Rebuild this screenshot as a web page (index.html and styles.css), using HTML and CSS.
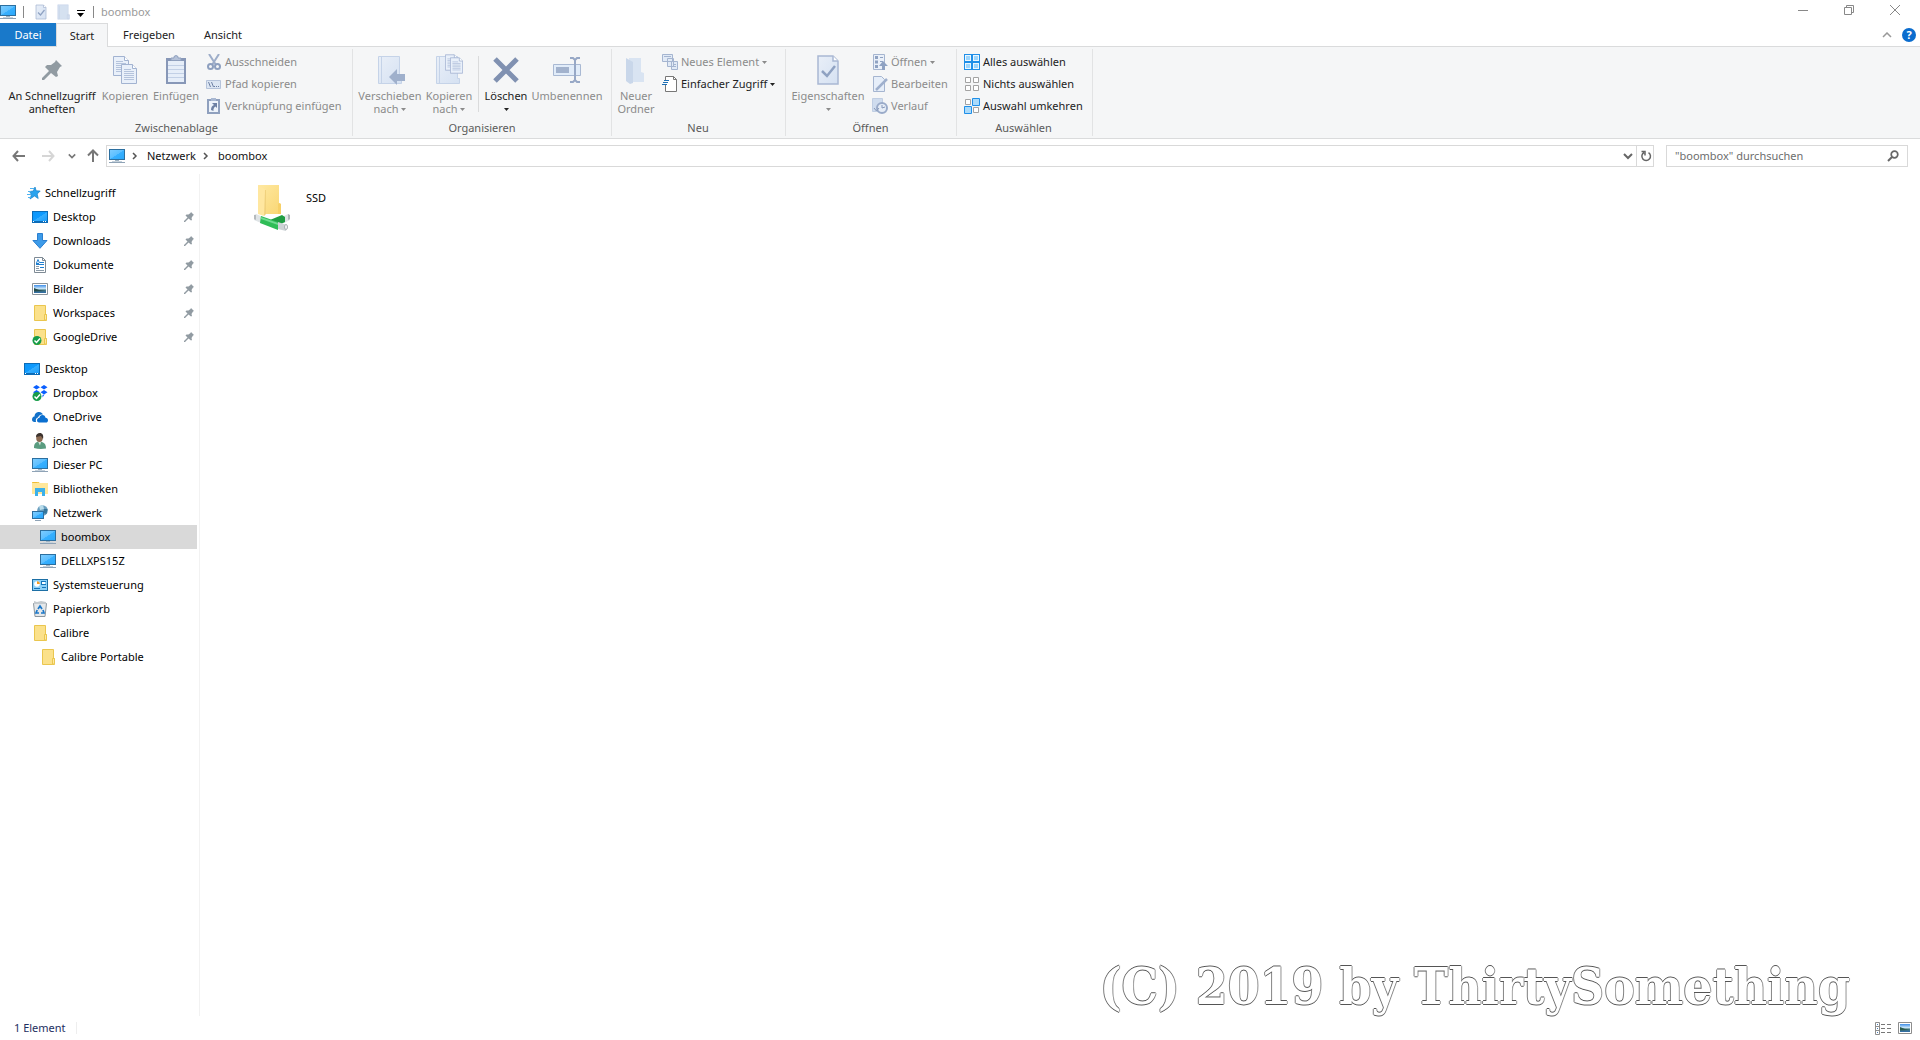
FILE: index.html
```html
<!DOCTYPE html>
<html lang="de">
<head>
<meta charset="utf-8">
<title>boombox</title>
<link rel="stylesheet" href="styles.css">
</head>
<body>
<svg class="sprite" aria-hidden="true">
  <defs>
    <linearGradient id="screen" x1="0" y1="0" x2="1" y2="1"><stop offset="0" stop-color="#7cccff"/><stop offset=".5" stop-color="#5cbfff"/><stop offset=".52" stop-color="#37b0ff"/><stop offset="1" stop-color="#2ba8fb"/></linearGradient>
    <linearGradient id="desk" x1="0" y1="0" x2="1" y2="1"><stop offset="0" stop-color="#0c95f8"/><stop offset=".5" stop-color="#0f9bff"/><stop offset=".52" stop-color="#35aeff"/><stop offset="1" stop-color="#1b9dfb"/></linearGradient>
    <linearGradient id="fold" x1="0" y1="0" x2="1" y2="1"><stop offset="0" stop-color="#ffe9a2"/><stop offset="1" stop-color="#f9d673"/></linearGradient>
    <linearGradient id="photo" x1="0" y1="0" x2="0" y2="1"><stop offset="0" stop-color="#3f8ee8"/><stop offset=".5" stop-color="#d8effb"/><stop offset=".6" stop-color="#4b7f86"/><stop offset="1" stop-color="#2f6ca8"/></linearGradient>
    <linearGradient id="page" x1="0" y1="0" x2="1" y2="1"><stop offset="0" stop-color="#e9eff8"/><stop offset="1" stop-color="#d5e1f2"/></linearGradient>
  </defs>
  <symbol id="pc" viewBox="0 0 16 16"><path fill="#2c6f9f" d="M0 1h16v11H0z"/><path fill="url(#screen)" d="M1 2h14v9H1z"/><path fill="#9fb3c2" d="M6 12h4v1H6z"/><path fill="#8fa3b6" d="M0 14h16v1H0z"/><path fill="#c6d2dc" d="M3 13h10v1H3z"/></symbol>
  <symbol id="desktop" viewBox="0 0 16 16"><path fill="#0b6cb8" d="M0 2h16v12H0z"/><path fill="url(#desk)" d="M1 3h14v9H1z"/><path fill="#fff" d="M1 12h1v1H1zM11 12h1v1h-1zM13 12h1v1h-1z"/></symbol>
  <symbol id="pin" viewBox="0 0 20 20"><path fill="#919ba2" d="M14 0l6 6-2 1-3 5 1 4-2 1-5-4-7 7H0v-2l7-7-4-4 2-2h4l4-3z"/></symbol>
  <symbol id="folder" viewBox="0 0 16 16"><path fill="#fbe18b" stroke="#eac64f" d="M2.500 .5h11v9h1v6h-12z"/><path fill="#ffe9a0" stroke="#eac64f" d="M12.500 9.500h2v5l-2 1z"/></symbol>
  <symbol id="badge" viewBox="0 0 16 16"><circle cx="5" cy="11.500" r="4.500" fill="#179c49"/><path fill="none" stroke="#fff" stroke-width="1.500" d="M2.500 11.500l2 2 3.500-4"/></symbol>
  <symbol id="doc" viewBox="0 0 16 16"><path fill="#fff" stroke="#7e8a94" d="M2.500 .5h8l3 3v12h-11z"/><path fill="none" stroke="#7e8a94" d="M10.500 .5v3h3"/><path fill="none" stroke="#1f7fd0" d="M4 6.500h3M8 5.500h4M4 7.500h8M4.500 6L6 2.500 7.500 6M8 10.500h4"/><path stroke="#8b9aa6" d="M4 9.500h3M4 11.500h3M4 13.500h8"/></symbol>
  <symbol id="picture" viewBox="0 0 16 16"><path fill="#fff" stroke="#8b939a" d="M.5 2.500h15v11H.5z"/><path fill="url(#photo)" d="M2 4h12v8H2z"/><path fill="#274c4c" d="M2 7l5 2 7 1-12 .500z"/></symbol>
  <symbol id="down" viewBox="0 0 16 16"><path fill="#3d9be9" stroke="#2b7fd0" d="M5.500 .5h5v7h4.500L8 15.300.900 7.500h4.600z"/></symbol>
  <symbol id="star" viewBox="0 0 16 16"><path fill="#29a3ee" stroke="#1580c8" stroke-width=".7" d="M9 2l1.200 3.800 4 .2-3 3 1 4.500L8.500 11l-4.500 3L5.500 9.500 3.500 6.500l3.800-.5z"/><path stroke="#4eb3f0" d="M4 3.500h4M2 6.500h3M1 9.500h4M2 12.500h3"/></symbol>
  <symbol id="dropbox" viewBox="0 0 16 16"><path fill="#0a5fff" d="M4.500 0L8 2.300 4.500 4.600 1 2.300zM12 0l3.500 2.300L12 4.600 8.500 2.300zM4.500 5L8 7.300 4.500 9.600 1 7.300zM12 5l3.500 2.300L12 9.600 8.500 7.300zM10.500 10l2-.5-2 3z"/></symbol>
  <symbol id="cloud" viewBox="0 0 16 16"><path fill="#1271c9" d="M0 10.500C0 8 2 7.500 2.500 7.500 2.800 4 5 3 7 3c2.500 0 3.500 1.500 4 2.500C8.500 5 6.500 6.500 6 8.500c-2 .500-2.500 2-2 4.500C1 13 0 12.500 0 10.500z"/><path fill="#0a6fd0" d="M5 11.500c0-2 1.500-2.500 2.300-2.500.2-2 1.700-3 3-3 2 0 3 1.200 3.200 2.700 1.500 0 2.500 1 2.500 2.500S15 13.500 14 13.500H7c-1 0-2-.8-2-2z"/></symbol>
  <symbol id="user" viewBox="0 0 16 16"><path fill="#5a9c80" d="M2 15c0-4 1-5.500 4-6.500l4 .5c3 1 4 3 4 6.500-4 .7-8 .7-12-.5z"/><path fill="#d6e6dc" d="M6 8.500l2 4 1-3.500z"/><ellipse cx="7.500" cy="4.800" rx="3.300" ry="4.300" fill="#8b6a52"/><path fill="#3c332e" d="M4 4C4 1 6 0 8 0s4 2 3 6L9 3z"/></symbol>
  <symbol id="library" viewBox="0 0 16 16"><path fill="#f2c94c" d="M0 1h7l1 2H0z"/><path fill="#ffe79a" d="M0 2h16v11H0z"/><path fill="#eebc35" d="M1 1h4v1H1z"/><path fill="#3cb0ea" d="M3 7h10v8h-3v-4H6v4H3z"/></symbol>
  <symbol id="network" viewBox="0 0 16 16"><circle cx="10.500" cy="5.500" r="5.300" fill="#6b9fbf"/><path fill="#b9dceb" d="M7 1l4-1 1 4-4 1z"/><path fill="#35759b" d="M12 4l3.500 0-1 5-3-1z"/><path fill="#2c6f9f" d="M0 6h12v8H0z"/><path fill="url(#screen)" d="M1 7h10v6H1z"/><path fill="#8fa3b6" d="M3 15h6v1H3z"/></symbol>
  <symbol id="control" viewBox="0 0 16 16"><path fill="#1d6fa5" d="M0 2h16v12H0z"/><path fill="#8bd0f8" d="M1 3h14v10H1z"/><circle cx="5" cy="7" r="2.800" fill="#fff"/><path fill="#f59b23" d="M5 7V4.200A2.800 2.800 0 017.800 7z"/><path stroke="#1574bb" d="M9 4.500h5M9 7.500h5M9.500 4v4M2 11.500h6M10 10.500h4"/><path fill="#fff" d="M10 5h3v2h-3z"/></symbol>
  <symbol id="bin" viewBox="0 0 16 16"><path fill="#e5e8ea" stroke="#8d979e" d="M1.500 2.500h13l-1.500 13H3z"/><path fill="#c3c9cd" d="M2 0l3 1 4-1 5 1v2H2z"/><path fill="none" stroke="#1c78c9" stroke-width="1.700" d="M6 8l2-3 2 3M11 9l1 3H9M7 12H4l1.200-3"/></symbol>
  <symbol id="qcheck" viewBox="0 0 30 32"><path fill="url(#page)" stroke="#a9b8d3" stroke-width="1.500" d="M5 2h15l5 5v23H5z"/><path fill="#fff" stroke="#a9b8d3" stroke-width="1.500" d="M20 2v5h5"/><path fill="none" stroke="#8fa2c2" stroke-width="2.500" d="M9 17l5 5 8-10"/></symbol>
  <symbol id="palefolder" viewBox="0 0 30 32"><path fill="#d5e1f0" stroke="#c5d3e8" d="M4.500 1.500h21v20h2v9h-23z"/><path fill="none" stroke="#c0cfe4" d="M7.500 4v26M23.500 21.500h4v8h-4z"/></symbol>
  <symbol id="sheet" viewBox="0 0 16 20"><path fill="#e9f0fa" stroke="#a2b3d1" d="M.5.5h11l4 4v15H.5z"/><path fill="#fff" stroke="#a2b3d1" d="M11.500.5v4h4"/><path stroke="#b4c3dc" d="M3 5.500h7M3 7.500h10M3 9.500h10M3 11.500h10M3 13.500h10M3 15.500h10"/></symbol>
  <symbol id="copy" viewBox="0 0 30 32"><use href="#sheet" x="3" y="2" width="16" height="20"/><use href="#sheet" x="11" y="10" width="16" height="20"/></symbol>
  <symbol id="paste" viewBox="0 0 30 32"><path fill="#8797b7" d="M5 4h20v26H5z"/><path fill="#e6eef9" d="M7 7h16v21H7z"/><path fill="#b4c1d8" stroke="#8fa0be" d="M10 6.500V4h3V2.500q2-2 4 0V4h3v2.500z"/><path stroke="#c2d0e6" d="M7 11.500h16M7 15.500h16M7 19.500h16M7 23.500h16"/></symbol>
  <symbol id="move" viewBox="0 0 30 32"><path fill="url(#page)" stroke="#c5d3e8" d="M3.500 2.500h21v22h2v5h-23z"/><path stroke="#c5d3e8" d="M6.500 3v26"/><path fill="#9fb0cc" d="M14 23l8-8v5h8v7h-8v4z"/></symbol>
  <symbol id="copyto" viewBox="0 0 30 32"><path fill="url(#page)" stroke="#c5d3e8" d="M2.500 2.500h21v22h2v5h-23z"/><path stroke="#c5d3e8" d="M5.500 3v26"/><use href="#sheet" x="11" y="0" width="13" height="17"/><use href="#sheet" x="16" y="3" width="13" height="17"/></symbol>
  <symbol id="cross" viewBox="0 0 30 32"><path fill="none" stroke="#8091b1" stroke-width="5" d="M4 5l22 22M26 5L4 27"/></symbol>
  <symbol id="rename" viewBox="0 0 30 32"><path fill="#e1ecf9" stroke="#a9b9d3" d="M1.500 10.500h27v11h-27z"/><path fill="#a2b2cd" d="M4 13h13v6H4z"/><path fill="none" stroke="#97a8c6" stroke-width="2" d="M18 4h3l2 2v20l-2 2h-3M28 4h-3l-2 2v20l2 2h3"/></symbol>
  <symbol id="newfolder" viewBox="0 0 30 32"><path fill="#d9e4f2" d="M8 4h12v14l3 1v9H9z"/><path fill="#c9d7ea" d="M5 4l7 4v21l-3 1-4-3z"/></symbol>
  <symbol id="cut" viewBox="0 0 16 16"><path stroke="#9dadc9" stroke-width="2" d="M3 0l7 11M13 0L6 11"/><circle cx="4.500" cy="12.500" r="2.500" fill="none" stroke="#8d9fbf" stroke-width="2"/><circle cx="11.500" cy="12.500" r="2.500" fill="none" stroke="#8d9fbf" stroke-width="2"/></symbol>
  <symbol id="path" viewBox="0 0 16 16"><path fill="#dce6f3" stroke="#b5c3da" d="M.5 4.500h14v8H.5z"/><path fill="none" stroke="#6d80a4" d="M2.500 6l2 5M5.500 6l2 5M8 10.500h1M10 10.500h1M12 10.500h1"/></symbol>
  <symbol id="link" viewBox="0 0 16 16"><path fill="#8fa0be" d="M1 1h13v15H1z"/><path fill="#edf3fb" d="M3 3h9v11H3z"/><path fill="#a9b8d2" d="M5 0h5v3H5z"/><path fill="#6d80a4" d="M6 5h5v5L9.500 8.500Q7 10 7.500 13L5 12q0-4 3-5z"/></symbol>
  <symbol id="newitem" viewBox="0 0 16 16"><path fill="#e1eaf6" stroke="#a5b5d0" d="M.5.5h10v7H.5zM5.500 4.500h6v8h-6zM9.500 7.500h6v8h-6z"/><path stroke="#a5b5d0" d="M2 2.500h7M11 10.500h3M11 12.500h3"/></symbol>
  <symbol id="easy" viewBox="0 0 16 16"><path fill="#fff" stroke="#777" d="M3.500 5V.5h8l3 3v12h-11V9"/><path fill="none" stroke="#777" d="M11.500.5v3h3"/><path stroke="#1c6fb5" d="M2 4.500h5M1 6.500h5M0 8.500h5"/></symbol>
  <symbol id="open" viewBox="0 0 16 16"><path fill="#eaf0f9" stroke="#a5b5d0" d="M1.500.5h11v15h-11z"/><path fill="#8fa2c2" d="M3 2h3v3H3zM3 6.500h3v3H3zM3 11h3v3H3zM8 3h3v1H8zM8 7h3v1H8zM11 7l5 5h-3v4h-3v-4H7z"/></symbol>
  <symbol id="edit" viewBox="0 0 16 16"><path fill="#e6eef9" stroke="#a5b5d0" d="M1.500.5h8l3 3v12h-11z"/><path stroke="#9fb0cd" stroke-width="2.500" d="M4 14L15 3"/></symbol>
  <symbol id="history" viewBox="0 0 16 16"><path fill="#cfdcee" stroke="#c0cee3" d="M.5.5h10v13H.5z"/><circle cx="10" cy="10" r="5" fill="#e6edf7" stroke="#9aabc9" stroke-width="2"/><path fill="none" stroke="#8799ba" d="M10 7v3l3-1M2 10l2.500 3L7 10"/></symbol>
  <symbol id="all" viewBox="0 0 16 16"><path fill="#1f8fe8" d="M0 0h16v16H0z"/><path fill="#e9f6ff" d="M1 1h6v6H1zM9 1h6v6H9zM1 9h6v6H1zM9 9h6v6H9z"/><path fill="#9dd5fb" d="M2 2h4v4H2zM10 2h4v4h-4zM2 10h4v4H2zM10 10h4v4h-4z"/></symbol>
  <symbol id="none" viewBox="0 0 16 16"><path fill="#fff" stroke="#a3a3a3" d="M1.500 1.500h5v5h-5zM9.500 1.500h5v5h-5zM1.500 9.500h5v5h-5zM9.500 9.500h5v5h-5z"/></symbol>
  <symbol id="invert" viewBox="0 0 16 16"><path fill="#fff" stroke="#a3a3a3" d="M1.500 1.500h5v5h-5zM9.500 9.500h5v5h-5z"/><path fill="#a9dafb" stroke="#1f8fe8" d="M8.500.5h7v7h-7zM.5 8.500h7v7h-7z"/></symbol>
  <symbol id="chev" viewBox="0 0 8 8"><path fill="none" stroke="currentColor" stroke-width="1.500" d="M2 1l3 3-3 3"/></symbol>
  <symbol id="chevdown" viewBox="0 0 10 10"><path fill="none" stroke="currentColor" stroke-width="2" d="M1 3l4 4 4-4"/></symbol>
  <symbol id="tri" viewBox="0 0 5 3"><path fill="currentColor" d="M0 0h5L2.500 3z"/></symbol>
</svg>

<div class="window">
  <header class="titlebar">
    <svg class="i16"><use href="#pc"/></svg>
    <span class="rule"></span>
    <button class="quick" aria-label="Eigenschaften"><svg class="i16"><use href="#qcheck"/></svg></button>
    <button class="quick" aria-label="Neuer Ordner"><svg class="i16"><use href="#palefolder"/></svg></button>
    <button class="quick narrow" aria-label="Anpassen"><svg width="8" height="7" viewBox="0 0 8 7"><path d="M0 0h8v1H0zM0 3h7L3.500 7z"/></svg></button>
    <span class="rule"></span>
    <span class="title">boombox</span>
    <div class="winbuttons">
      <button aria-label="Minimieren"><svg width="10" height="10"><path stroke="#888" d="M0 5.500h10"/></svg></button>
      <button aria-label="Verkleinern"><svg width="10" height="10"><path fill="none" stroke="#888" d="M.5 2.500h7v7h-7zM2.500 2V.5h7v7H8"/></svg></button>
      <button aria-label="Schließen"><svg width="10" height="10"><path stroke="#888" d="M0 0l10 10M10 0L0 10"/></svg></button>
    </div>
  </header>

  <nav class="tabs">
    <button class="tab file">Datei</button>
    <button class="tab active">Start</button>
    <button class="tab share">Freigeben</button>
    <button class="tab view">Ansicht</button>
    <div class="tabtools">
      <button aria-label="Menüband minimieren"><svg width="10" height="6"><path fill="none" stroke="#999" stroke-width="1.500" d="M1 5l4-4 4 4"/></svg></button>
      <button class="help" aria-label="Hilfe">?</button>
    </div>
  </nav>

  <section class="ribbon">
    <div class="group clip">
      <div class="tools">
        <button class="big w94 on"><svg class="i30" viewBox="-5 -6 30 32"><use href="#pin" width="20" height="20"/></svg><span>An Schnellzugriff<br>anheften</span></button>
        <button class="big w52"><svg class="i30"><use href="#copy"/></svg><span>Kopieren</span></button>
        <button class="big w50"><svg class="i30"><use href="#paste"/></svg><span>Einfügen</span></button>
        <div class="stack">
          <button class="small"><svg class="i16"><use href="#cut"/></svg>Ausschneiden</button>
          <button class="small"><svg class="i16"><use href="#path"/></svg>Pfad kopieren</button>
          <button class="small"><svg class="i16"><use href="#link"/></svg>Verknüpfung einfügen</button>
        </div>
      </div>
      <h2>Zwischenablage</h2>
    </div>
    <div class="group org">
      <div class="tools">
        <button class="big w66"><svg class="i30"><use href="#move"/></svg><span>Verschieben<br>nach <svg class="tri"><use href="#tri"/></svg></span></button>
        <button class="big w52"><svg class="i30"><use href="#copyto"/></svg><span>Kopieren<br>nach <svg class="tri"><use href="#tri"/></svg></span></button>
        <span class="split"></span>
        <button class="big w50 on"><svg class="i30"><use href="#cross"/></svg><span>Löschen<br><svg class="tri"><use href="#tri"/></svg></span></button>
        <button class="big w72"><svg class="i30"><use href="#rename"/></svg><span>Umbenennen</span></button>
      </div>
      <h2>Organisieren</h2>
    </div>
    <div class="group new">
      <div class="tools">
        <button class="big w42"><svg class="i30"><use href="#newfolder"/></svg><span>Neuer<br>Ordner</span></button>
        <div class="stack">
          <button class="small"><svg class="i16"><use href="#newitem"/></svg>Neues Element <svg class="tri"><use href="#tri"/></svg></button>
          <button class="small on"><svg class="i16"><use href="#easy"/></svg>Einfacher Zugriff <svg class="tri"><use href="#tri"/></svg></button>
        </div>
      </div>
      <h2>Neu</h2>
    </div>
    <div class="group opn">
      <div class="tools">
        <button class="big w78"><svg class="i30"><use href="#qcheck"/></svg><span>Eigenschaften<br><svg class="tri"><use href="#tri"/></svg></span></button>
        <div class="stack">
          <button class="small"><svg class="i16"><use href="#open"/></svg>Öffnen <svg class="tri"><use href="#tri"/></svg></button>
          <button class="small"><svg class="i16"><use href="#edit"/></svg>Bearbeiten</button>
          <button class="small"><svg class="i16"><use href="#history"/></svg>Verlauf</button>
        </div>
      </div>
      <h2>Öffnen</h2>
    </div>
    <div class="group sel">
      <div class="tools">
        <div class="stack">
          <button class="small on"><svg class="i16"><use href="#all"/></svg>Alles auswählen</button>
          <button class="small on"><svg class="i16"><use href="#none"/></svg>Nichts auswählen</button>
          <button class="small on"><svg class="i16"><use href="#invert"/></svg>Auswahl umkehren</button>
        </div>
      </div>
      <h2>Auswählen</h2>
    </div>
  </section>

  <div class="addressrow">
    <div class="history">
      <button aria-label="Zurück"><svg width="14" height="12"><path fill="none" stroke="#777" stroke-width="2" d="M13 6H2M6 1L1.500 6 6 11"/></svg></button>
      <button aria-label="Vorwärts"><svg width="14" height="12"><path fill="none" stroke="#d6d6d6" stroke-width="2" d="M0 6h12M7 1l4.500 5L7 11"/></svg></button>
      <button class="recent" aria-label="Zuletzt besucht"><svg width="8" height="8"><use href="#chevdown"/></svg></button>
      <button class="up" aria-label="Nach oben"><svg width="12" height="14"><path fill="none" stroke="#777" stroke-width="2" d="M6 13V2M1 6.500l5-5 5 5"/></svg></button>
    </div>
    <div class="address">
      <svg class="i16"><use href="#pc"/></svg>
      <svg class="sep"><use href="#chev"/></svg>
      <a href="#netzwerk">Netzwerk</a>
      <svg class="sep"><use href="#chev"/></svg>
      <a href="#boombox">boombox</a>
      <button class="drop" aria-label="Verlauf anzeigen"><svg width="10" height="10"><use href="#chevdown"/></svg></button>
      <button class="reload" aria-label="Aktualisieren"><svg width="12" height="12"><path fill="none" stroke="#666" stroke-width="1.500" d="M4 2.500A4.300 4.300 0 1 0 8.500 2.600M1.500 1.500h3.500v4"/></svg></button>
    </div>
    <div class="search">
      <input type="text" placeholder="&quot;boombox&quot; durchsuchen" aria-label="boombox durchsuchen">
      <svg width="12" height="12"><circle cx="7.500" cy="4.500" r="3.300" fill="none" stroke="#666" stroke-width="1.700"/><path stroke="#666" stroke-width="2" d="M5 7L1 11"/></svg>
    </div>
  </div>

  <main class="body">
    <nav class="tree">
      <ul>
        <li class="l0 quickhead"><a href="#q"><svg class="i16"><use href="#star"/></svg>Schnellzugriff</a></li>
        <li class="l1"><a href="#q1"><svg class="i16"><use href="#desktop"/></svg>Desktop<svg class="pinned"><use href="#pin"/></svg></a></li>
        <li class="l1"><a href="#q2"><svg class="i16"><use href="#down"/></svg>Downloads<svg class="pinned"><use href="#pin"/></svg></a></li>
        <li class="l1"><a href="#q3"><svg class="i16"><use href="#doc"/></svg>Dokumente<svg class="pinned"><use href="#pin"/></svg></a></li>
        <li class="l1"><a href="#q4"><svg class="i16"><use href="#picture"/></svg>Bilder<svg class="pinned"><use href="#pin"/></svg></a></li>
        <li class="l1"><a href="#q5"><svg class="i16"><use href="#folder"/></svg>Workspaces<svg class="pinned"><use href="#pin"/></svg></a></li>
        <li class="l1"><a href="#q6"><svg class="i16"><use href="#folder"/><use href="#badge"/></svg>GoogleDrive<svg class="pinned"><use href="#pin"/></svg></a></li>
      </ul>
      <ul>
        <li class="l0"><a href="#d"><svg class="i16"><use href="#desktop"/></svg>Desktop</a></li>
        <li class="l1"><a href="#d1"><svg class="i16"><use href="#dropbox"/><use href="#badge"/></svg>Dropbox</a></li>
        <li class="l1"><a href="#d2"><svg class="i16"><use href="#cloud"/></svg>OneDrive</a></li>
        <li class="l1"><a href="#d3"><svg class="i16"><use href="#user"/></svg>jochen</a></li>
        <li class="l1"><a href="#d4"><svg class="i16"><use href="#pc"/></svg>Dieser PC</a></li>
        <li class="l1"><a href="#d5"><svg class="i16"><use href="#library"/></svg>Bibliotheken</a></li>
        <li class="l1"><a href="#netzwerk"><svg class="i16"><use href="#network"/></svg>Netzwerk</a></li>
        <li class="l2 current"><a href="#boombox"><svg class="i16"><use href="#pc"/></svg>boombox</a></li>
        <li class="l2"><a href="#d6"><svg class="i16"><use href="#pc"/></svg>DELLXPS15Z</a></li>
        <li class="l1"><a href="#d7"><svg class="i16"><use href="#control"/></svg>Systemsteuerung</a></li>
        <li class="l1"><a href="#d8"><svg class="i16"><use href="#bin"/></svg>Papierkorb</a></li>
        <li class="l1"><a href="#d9"><svg class="i16"><use href="#folder"/></svg>Calibre</a></li>
        <li class="l2"><a href="#d10"><svg class="i16"><use href="#folder"/></svg>Calibre Portable</a></li>
      </ul>
    </nav>
    <section class="files">
      <a class="tile" href="#ssd">
        <svg width="38" height="48" viewBox="0 0 38 48">
          <path fill="url(#fold)" d="M5 1h21v18l2 1v10H12z"/><path fill="#f7d067" d="M26 19l2 1v10h-3V20z"/><path fill="#ffe7a0" d="M5 1l8 5v23l-2 3-6-2z"/><path fill="#f1d27d" d="M12 6h1v24l-2 2z"/>
          <path fill="#dfe4e6" d="M1 31l2-1 7 3-2 6-7-3z"/><path fill="#b5babd" d="M1 31l2 0v5l-2-1z"/>
          <path fill="#dfe4e6" d="M29 33l6-3 2 2v4l-6 3z"/><path fill="#aeb4b7" d="M35 30l2 1v4l-2 1z"/>
          <path fill="#1f9d43" d="M17 36l12-5 3 2v5l-8 4z"/>
          <path fill="#2fbd57" d="M8 32l17 6v8L7 39z"/><path fill="#6fdb90" d="M8 33l17 6v2L8 35z"/>
          <path fill="#cdd3d6" d="M25 38l9 3-1 6-8-2z"/><ellipse cx="33" cy="43" rx="1.500" ry="2.500" fill="#f5f7f8" stroke="#a9afb3"/>
        </svg>
        <span>SSD</span>
      </a>
    </section>
    <p class="watermark">(C) 2019 by ThirtySomething</p>
  </main>

  <footer class="status">
    <span class="count">1 Element</span>
    <div class="modes">
      <button aria-label="Details"><svg width="17" height="13"><path fill="#fff" stroke="#8d8d8d" d="M.5.5h4v12h-4zM0 4.500h5M0 8.500h5"/><path stroke="#777" stroke-dasharray="4 2" d="M6 2.500h10M6 6.500h10M6 10.500h10"/><path fill="#4a7fb8" d="M2 2h1v1H2zM2 6h1v1H2zM2 10h1v1H2z"/></svg></button>
      <button aria-label="Große Symbole"><svg width="14" height="12"><path fill="#fff" stroke="#8d8d8d" d="M.5.500h13v11H.5z"/><path fill="url(#photo)" d="M2 2h10v8H2z"/><path fill="#2c5c50" d="M2 5l5 2 5 1-10 .500z"/></svg></button>
    </div>
  </footer>
</div>
</body>
</html>
```

FILE: styles.css
```css
* { box-sizing: border-box; }
body { margin: 0; background: #fff; color: #000; font: 11px/16px "Noto Sans", "Open Sans", sans-serif; }
button { margin: 0; padding: 0; border: 0; background: none; font: inherit; color: inherit; }
a { color: inherit; text-decoration: none; }
svg { display: block; flex: none; }
ul { list-style: none; margin: 0; padding: 0; }
.sprite { position: absolute; width: 0; height: 0; }
.i16 { width: 16px; height: 16px; }
.i30 { width: 30px; height: 32px; }
.window { display: flex; flex-direction: column; min-height: 100vh; }

.titlebar { display: flex; align-items: center; height: 23px; color: #999; }
.rule { width: 1px; height: 12px; background: #888; margin: 0 7px; }
.rule + .quick { margin-left: -1px; }
.quick { width: 22px; display: flex; justify-content: center; color: #000; }
.quick.narrow { width: 14px; padding-top: 4px; }
.quick.narrow + .rule { margin-left: 5px; }
.winbuttons { display: flex; margin-left: auto; padding: 0 2px 3px 0; }
.winbuttons button { width: 46px; display: flex; justify-content: center; }

.tabs { display: flex; height: 24px; border-bottom: 1px solid #dadbdc; color: #222; }
.tab { height: 23px; }
.file { width: 56px; background: #1979ca; color: #fff; }
.active { width: 52px; height: 24px; border: 1px solid #dadbdc; border-bottom: 0; background: #f5f6f7; }
.share { width: 82px; }
.view { width: 66px; }
.tabtools { display: flex; align-items: center; gap: 10px; margin-left: auto; padding-right: 4px; }
.help { width: 14px; height: 14px; border-radius: 50%; background: #0a6cce; color: #fff; line-height: 14px; font-weight: 700; }

.ribbon { display: flex; height: 92px; padding: 2px 0; background: #f5f6f7; border-bottom: 1px solid #dadbdc; color: #8b8b8b; }
.group { display: flex; flex-direction: column; border-right: 1px solid #e2e3e4; }
.clip { width: 353px; padding-left: 5px; }
.org { width: 259px; padding-left: 4px; }
.new { width: 174px; padding-left: 3px; }
.opn { width: 171px; padding-left: 3px; }
.sel { width: 136px; padding-left: 2px; }
.group h2 { margin: 0; padding-right: 4px; font: inherit; text-align: center; color: #5a5a5a; }
.tools { display: flex; height: 73px; }
.on { color: #222; }
.big { display: flex; flex-direction: column; align-items: center; padding-top: 5px; white-space: nowrap; line-height: 13px; }
.big span { padding-top: 3px; }
.big .tri { display: inline-block; margin-bottom: 2px; }
.w42 { width: 42px; }
.w50 { width: 50px; }
.w52 { width: 52px; }
.w66 { width: 66px; }
.w72 { width: 72px; }
.w78 { width: 78px; }
.w94 { width: 94px; }
.tri { width: 5px; height: 3px; }
.split { width: 1px; height: 56px; margin: 7px 2px 0 3px; background: #dadbdc; }
.stack { padding: 2px 0 0 5px; }
.small { display: flex; align-items: center; gap: 3px; height: 22px; white-space: nowrap; }

.addressrow { display: flex; align-items: center; height: 34px; padding: 0 12px 0 0; color: #111; }
.history { display: flex; align-items: center; width: 106px; padding-left: 12px; color: #777; }
.history button { width: 30px; }
.history .recent { width: 8px; margin-left: -4px; }
.history .up { margin-left: auto; width: 19px; }
.address { display: flex; align-items: center; flex: 1; height: 22px; border: 1px solid #d9d9d9; padding-left: 2px; }
.address .sep { width: 8px; height: 8px; margin: 0 8px 0 6px; color: #555; }
.drop { margin-left: auto; width: 13px; color: #666; }
.reload { width: 17px; height: 20px; border-left: 1px solid #d9d9d9; padding-left: 3px; }
.search { display: flex; align-items: center; width: 242px; height: 22px; margin-left: 12px; padding: 0 8px; border: 1px solid #d9d9d9; }
.search input { flex: 1; min-width: 0; border: 0; padding: 0; outline: 0; font: inherit; }
.search input::placeholder { color: #6d6d6d; }

.body { position: relative; display: flex; flex: 1; }
.tree { width: 200px; margin-top: 1px; padding-top: 7px; border-right: 1px solid #f2f2f2; }
.tree ul { margin-bottom: 8px; }
.tree li { margin-right: 2px; }
.tree a { display: flex; align-items: center; gap: 5px; height: 24px; padding-right: 3px; }
.l0 { padding-left: 24px; }
.l1 { padding-left: 32px; }
.l2 { padding-left: 40px; }
.quickhead a { padding-left: 2px; gap: 3px; }
.current { background: #d9d9d9; }
.pinned { width: 10px; height: 10px; margin-left: auto; }
.files { flex: 1; padding: 11px 0 0 53px; }
.tile { display: inline-flex; gap: 15px; }
.tile span { padding-top: 6px; }
.watermark { position: absolute; right: 70px; bottom: -2px; margin: 0; color: #fff; font: bold 51px/64px "DejaVu Serif Condensed", "DejaVu Serif", serif; white-space: nowrap; text-shadow: 0 -1px 0 #555, 0 1px 0 #555, -1px 0 0 #888, 1px 0 0 #aaa; }

.status { display: flex; align-items: center; height: 24px; padding: 0 8px 0 14px; color: #1e2f5f; }
.count { width: 63px; line-height: 12px; border-right: 1px solid #eee; }
.modes { display: flex; gap: 6px; margin-left: auto; }
```
